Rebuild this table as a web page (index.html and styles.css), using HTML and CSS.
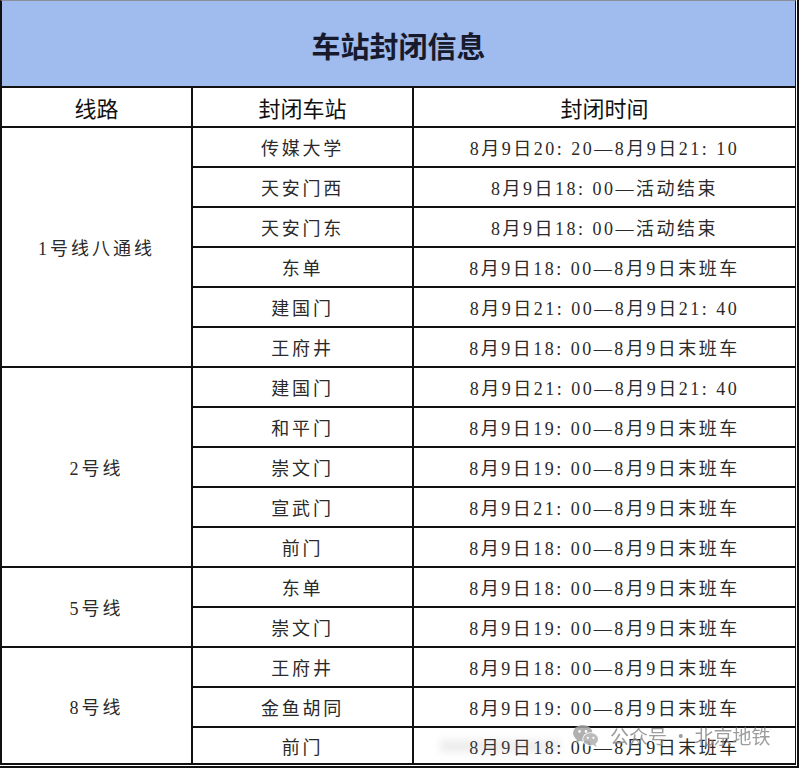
FILE: index.html
```html
<!DOCTYPE html>
<html lang="zh-CN">
<head>
<meta charset="utf-8">
<title>车站封闭信息</title>
<link rel="stylesheet" href="styles.css">
</head>
<body>
<div class="page">
  <div class="frame">
    <div class="grid">
      <div class="title">车站封闭信息</div>
      <div class="th">线路</div>
      <div class="th">封闭车站</div>
      <div class="th">封闭时间</div>

      <div class="line span6">1号线八通线</div>
      <div class="st">传媒大学</div><div class="tm">8月9日20: 20—8月9日21: 10</div>
      <div class="st">天安门西</div><div class="tm">8月9日18: 00—活动结束</div>
      <div class="st">天安门东</div><div class="tm">8月9日18: 00—活动结束</div>
      <div class="st">东单</div><div class="tm">8月9日18: 00—8月9日末班车</div>
      <div class="st">建国门</div><div class="tm">8月9日21: 00—8月9日21: 40</div>
      <div class="st">王府井</div><div class="tm">8月9日18: 00—8月9日末班车</div>

      <div class="line span5">2号线</div>
      <div class="st">建国门</div><div class="tm">8月9日21: 00—8月9日21: 40</div>
      <div class="st">和平门</div><div class="tm">8月9日19: 00—8月9日末班车</div>
      <div class="st">崇文门</div><div class="tm">8月9日19: 00—8月9日末班车</div>
      <div class="st">宣武门</div><div class="tm">8月9日21: 00—8月9日末班车</div>
      <div class="st">前门</div><div class="tm">8月9日18: 00—8月9日末班车</div>

      <div class="line span2">5号线</div>
      <div class="st">东单</div><div class="tm">8月9日18: 00—8月9日末班车</div>
      <div class="st">崇文门</div><div class="tm">8月9日19: 00—8月9日末班车</div>

      <div class="line span3">8号线</div>
      <div class="st">王府井</div><div class="tm">8月9日18: 00—8月9日末班车</div>
      <div class="st">金鱼胡同</div><div class="tm">8月9日19: 00—8月9日末班车</div>
      <div class="st">前门</div><div class="tm">8月9日18: 00—8月9日末班车</div>
    </div>
  </div>

  <div class="smudge"></div>
  <div class="watermark">
    <svg class="wx" viewBox="0 0 30 26" width="28" height="24" aria-hidden="true">
      <ellipse cx="11.5" cy="10" rx="10.5" ry="9" fill="#a3a3a3"/>
      <path d="M5 16.5 L3.5 21 L9 18 Z" fill="#a3a3a3"/>
      <circle cx="8" cy="8" r="1.4" fill="#fff"/>
      <circle cx="15" cy="8" r="1.4" fill="#fff"/>
      <ellipse cx="20" cy="16.5" rx="9" ry="7.5" fill="#fff"/>
      <ellipse cx="20" cy="16.5" rx="8" ry="6.7" fill="#b0b0b0"/>
      <path d="M25 21.5 L27 25 L22 22.5 Z" fill="#b0b0b0"/>
      <circle cx="17" cy="15" r="1.2" fill="#fff"/>
      <circle cx="23" cy="15" r="1.2" fill="#fff"/>
    </svg>
    <span class="wm-text">公众号 · 北京地铁</span>
  </div>
</div>
</body>
</html>
```
FILE: styles.css
```css
html, body {
  margin: 0;
  padding: 0;
  background: #ffffff;
}

body {
  font-family: "Liberation Serif", "Noto Sans CJK SC", serif;
  color: #222;
}

.page {
  position: relative;
  width: 801px;
  height: 771px;
  overflow: hidden;
}

.frame {
  width: 796px;
  padding: 0 1px 1px 0;
  border-right: 2px solid #111;
  border-bottom: 2px solid #111;
}

.grid {
  box-sizing: border-box;
  width: 796px;
  display: grid;
  grid-template-columns: 189px 219px 1fr;
  grid-template-rows: 85px 38px repeat(15, 38px) 35px;
  gap: 2px;
  background: #111;
  border-top: 1px solid #8a8f9a;
  border-left: 2px solid #111;
  border-right: 1px solid #111;
  border-bottom: 2px solid #111;
}

.grid > div {
  background: #fff;
  display: flex;
  align-items: center;
  justify-content: center;
  white-space: pre;
}

.grid > .title {
  grid-column: 1 / 4;
  background: #a0bbee;
  font-family: "Noto Sans CJK SC", sans-serif;
  font-weight: 700;
  font-size: 29px;
  color: #161a2c;
  padding-top: 2px;
  box-sizing: border-box;
}

.th {
  font-family: "Noto Sans CJK SC", sans-serif;
  font-size: 22px;
  color: #111;
}

.line {
  grid-column: 1;
  font-size: 18px;
  letter-spacing: 3px;
  color: #2a2a2a;
}

.span6 { grid-row: span 6; }
.span5 { grid-row: span 5; }
.span3 { grid-row: span 3; }
.span2 { grid-row: span 2; }

.st {
  grid-column: 2;
  font-size: 18px;
  letter-spacing: 2.8px;
  color: #2a2a2a;
}

.tm {
  grid-column: 3;
  font-size: 18px;
  letter-spacing: 2.5px;
  color: #2a2a2a;
}

.smudge {
  position: absolute;
  left: 440px;
  top: 740px;
  width: 120px;
  height: 12px;
  background: rgba(150, 150, 150, 0.18);
  filter: blur(4px);
}

.watermark {
  position: absolute;
  left: 572px;
  top: 722px;
  display: flex;
  align-items: center;
  gap: 10px;
  opacity: 0.85;
}

.wx {
  display: block;
}

.wm-text {
  font-family: "Noto Sans CJK SC", sans-serif;
  font-size: 19px;
  color: #8c8c8c;
}
```
